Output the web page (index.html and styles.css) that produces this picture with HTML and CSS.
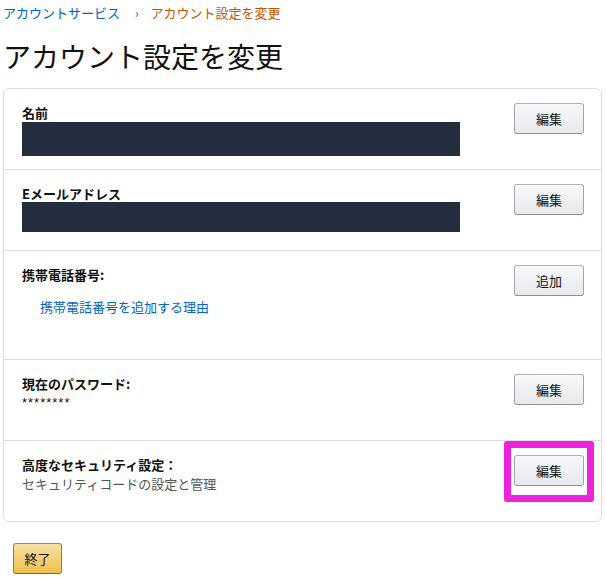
FILE: index.html
```html
<!DOCTYPE html>
<html lang="ja">
<head>
<meta charset="utf-8">
<title>アカウント設定を変更</title>
<link rel="stylesheet" href="styles.css">
</head>
<body>
<div class="page">
  <nav class="crumbs">
    <a class="crumb-link" href="#">アカウントサービス</a>
    <span class="crumb-sep">›</span>
    <span class="crumb-current">アカウント設定を変更</span>
  </nav>
  <h1 class="title">アカウント設定を変更</h1>
  <div class="card">
    <div class="row row-std">
      <div class="info">
        <div class="label">名前</div>
        <div class="redact redact-a"></div>
      </div>
      <div class="action"><button class="btn">編集</button></div>
    </div>
    <div class="row row-std">
      <div class="info">
        <div class="label">Eメールアドレス</div>
        <div class="redact redact-b"></div>
      </div>
      <div class="action"><button class="btn">編集</button></div>
    </div>
    <div class="row row-tall">
      <div class="info">
        <div class="label">携帯電話番号:</div>
        <a class="reason" href="#">携帯電話番号を追加する理由</a>
      </div>
      <div class="action"><button class="btn">追加</button></div>
    </div>
    <div class="row row-std">
      <div class="info">
        <div class="label">現在のパスワード:</div>
        <div class="stars">********</div>
      </div>
      <div class="action"><button class="btn">編集</button></div>
    </div>
    <div class="row row-std">
      <div class="info">
        <div class="label">高度なセキュリティ設定：</div>
        <div class="sub">セキュリティコードの設定と管理</div>
      </div>
      <div class="action highlight-wrap">
        <button class="btn">編集</button>
        <span class="highlight"></span>
      </div>
    </div>
  </div>
  <button class="btn-done">終了</button>
</div>
</body>
</html>
```

FILE: styles.css
```css
* { box-sizing: border-box; }
html, body { margin: 0; padding: 0; background: #fff; }
body {
  font-family: "Noto Sans CJK JP", "Liberation Sans", sans-serif;
  font-size: 13px;
  line-height: 19px;
  color: #111;
}
.page { width: 599px; margin-left: 3px; }
.crumbs { padding-top: 3px; height: 22px; white-space: nowrap; }
.crumb-link { color: #0066c0; text-decoration: none; }
.crumb-sep { color: #555; margin: 0 9px 0 12px; font-size: 12px; }
.crumb-current { color: #c45500; }
.title {
  margin: 14px 0 12px 0;
  font-size: 28px;
  line-height: 40px;
  font-weight: 400;
  color: #111;
}
.card {
  border: 1px solid #ddd;
  border-radius: 6px;
}
.row {
  display: flex;
  justify-content: space-between;
  padding: 14px 17px 0 18px;
  border-top: 1px solid #ddd;
}
.row:first-child { border-top: none; }
.row-std { height: 81px; }
.row:first-child { height: 80px; }
.row-tall { height: 109px; }
.label { font-weight: 700; }
.redact { background: #232f3e; width: 438px; }
.redact-a { height: 34px; }
.redact-b { height: 30px; margin-top: -1px; }
.reason {
  display: block;
  margin: 13px 0 0 18px;
  color: #0066c0;
  text-decoration: none;
}
.stars { font-family: "Liberation Sans", sans-serif; font-size: 13px; letter-spacing: 1px; }
.sub { color: #555; }
.action { flex: none; }
.btn {
  width: 70px;
  height: 31px;
  padding: 0;
  font-family: inherit;
  font-size: 13px;
  color: #111;
  background: linear-gradient(#f7f8fa, #e7e9ec);
  border: 1px solid;
  border-color: #adb1b8 #a2a6ac #8d9096;
  border-radius: 3px;
  box-shadow: 0 1px 0 rgba(255,255,255,.6) inset;
}
.highlight-wrap { position: relative; height: 31px; }
.highlight {
  position: absolute;
  left: -10px;
  top: -14px;
  right: -10px;
  bottom: -16px;
  border: 7px solid #ec22dc;
  border-radius: 3px;
}
.btn-done {
  display: block;
  margin: 21px 0 0 10px;
  width: 49px;
  height: 31px;
  padding: 0;
  font-family: inherit;
  font-size: 13px;
  color: #111;
  background: linear-gradient(#f7dfa5, #f0c14b);
  border: 1px solid;
  border-color: #a88734 #9c7e31 #846a29;
  border-radius: 3px;
}
```
